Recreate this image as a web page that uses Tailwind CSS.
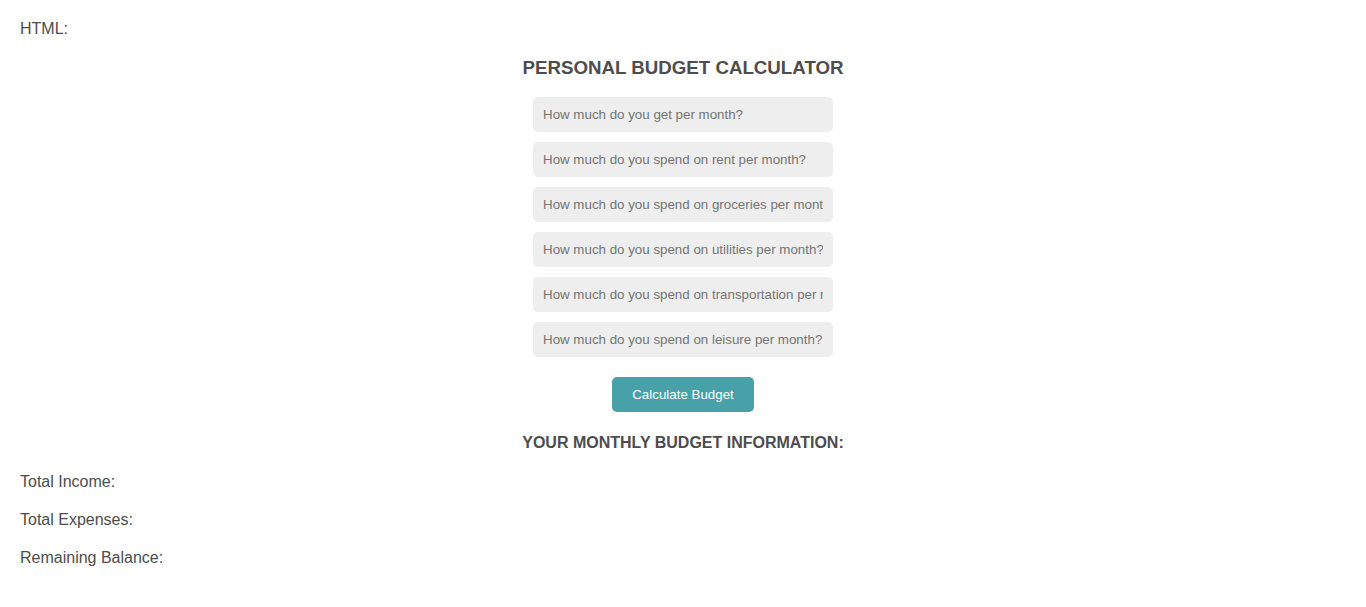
<!DOCTYPE html>
<html lang="en">
<head>
<meta charset="utf-8">
<title>Personal Budget Calculator</title>
<script src="https://cdn.jsdelivr.net/npm/@tailwindcss/browser@4"></script>
</head>
<body class="bg-white p-5 font-['Liberation_Sans',Arial,sans-serif] text-base leading-[18px] text-[#4d4d4d]">
<p>HTML:</p>
<h1 class="mt-[19px] text-center text-[18.72px] leading-[22px] font-bold">PERSONAL BUDGET CALCULATOR</h1>
<form class="mt-[18px] flex flex-col items-center gap-2.5 text-[13.3333px] leading-[15px]">
<input class="h-[35px] w-[300px] rounded-[5px] bg-[#eeeeee] p-2.5 placeholder:text-[#757575]" placeholder="How much do you get per month?">
<input class="h-[35px] w-[300px] rounded-[5px] bg-[#eeeeee] p-2.5 placeholder:text-[#757575]" placeholder="How much do you spend on rent per month?">
<input class="h-[35px] w-[300px] rounded-[5px] bg-[#eeeeee] p-2.5 placeholder:text-[#757575]" placeholder="How much do you spend on groceries per month?">
<input class="h-[35px] w-[300px] rounded-[5px] bg-[#eeeeee] p-2.5 placeholder:text-[#757575]" placeholder="How much do you spend on utilities per month?">
<input class="h-[35px] w-[300px] rounded-[5px] bg-[#eeeeee] p-2.5 placeholder:text-[#757575]" placeholder="How much do you spend on transportation per month?">
<input class="h-[35px] w-[300px] rounded-[5px] bg-[#eeeeee] p-2.5 placeholder:text-[#757575]" placeholder="How much do you spend on leisure per month?">
<button type="button" class="mt-2.5 h-[35px] rounded-[5px] bg-[#48a0a8] px-5 text-white">Calculate Budget</button>
</form>
<h2 class="mt-[22px] text-center font-bold">YOUR MONTHLY BUDGET INFORMATION:</h2>
<div class="mt-[21px] space-y-5">
<p>Total Income:</p>
<p>Total Expenses:</p>
<p>Remaining Balance:</p>
</div>
</body>
</html>
